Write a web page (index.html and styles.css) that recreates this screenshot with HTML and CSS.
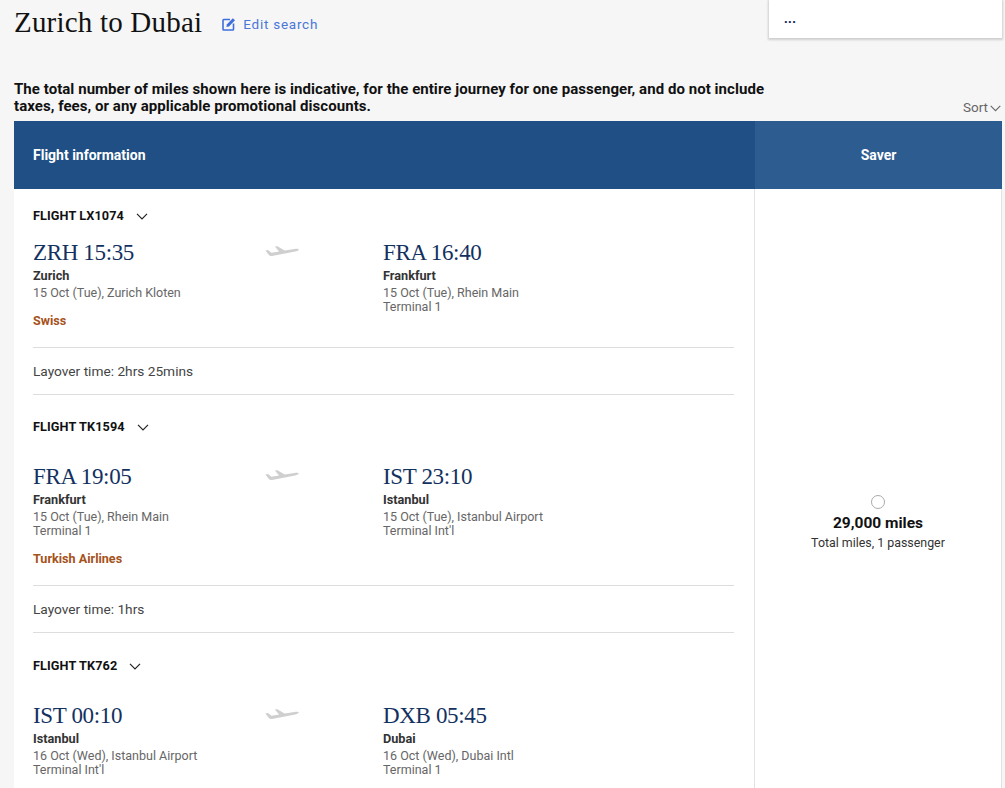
FILE: index.html
```html
<!DOCTYPE html>
<html lang="en">
<head>
<meta charset="utf-8">
<title>Zurich to Dubai</title>
<link rel="stylesheet" href="styles.css">
</head>
<body>
<div class="page">
  <div class="popup"><span class="dots">...</span></div>
  <div class="title-row">
    <h1 class="title">Zurich to Dubai</h1>
    <a class="edit">
      <svg class="edit-icon" viewBox="0 0 14 14" width="14" height="14"><path d="M8 2.500H1.700a.7.7 0 0 0-.7.7v9.100c0 .4.3.7.7.7h9.100c.4 0 .7-.3.7-.7V6.500" fill="none" stroke="#3f6fdc" stroke-width="1.6"/><path d="M5 7.300 10.800 1.200 13 3.300 7 9.400l-2.600.5z" fill="#3f6fdc"/></svg>
      Edit search
    </a>
  </div>
  <div class="notice-row">
    <p class="notice">The total number of miles shown here is indicative, for the entire journey for one passenger, and do not include taxes, fees, or any applicable promotional discounts.</p>
    <div class="sort">Sort<svg class="sort-chev" viewBox="0 0 11 7" width="11" height="7"><path d="M.7.8 5.500 5.600 10.300.8" fill="none" stroke="#666" stroke-width="1.1"/></svg></div>
  </div>
  <div class="table">
    <div class="head">
      <div class="head-info">Flight information</div>
      <div class="head-fare">Saver</div>
    </div>
    <div class="body">
      <div class="legs">
        <section class="leg leg-first">
          <div class="flight">FLIGHT LX1074<svg class="chev" viewBox="0 0 12 7" width="12" height="7"><path d="M1 .8 6 5.800 11 .8" fill="none" stroke="#222" stroke-width="1.2"/></svg></div>
          <div class="route route-first">
            <div class="stop">
              <div class="time">ZRH 15:35</div>
              <div class="city">Zurich</div>
              <div class="info">15 Oct (Tue), Zurich Kloten</div>
            </div>
            <svg class="plane" viewBox="0 0 34 14" width="34" height="14"><path d="M.5 5.500 3 5l3.500 2.700 7.600-1.200L9.800 1.600l2.600-.4 7.200 4.400 10-1.600c2-.3 4-.2 4.200.6.100.8-1.600 1.400-3.600 1.800L7 11C5.600 11.200 4.600 10.800 3.800 10z" fill="#cfcfcf"/></svg>
            <div class="stop">
              <div class="time">FRA 16:40</div>
              <div class="city">Frankfurt</div>
              <div class="info">15 Oct (Tue), Rhein Main<br>Terminal 1</div>
            </div>
          </div>
          <div class="airline airline-swiss">Swiss</div>
        </section>
        <div class="layover">Layover time: 2hrs 25mins</div>
        <section class="leg">
          <div class="flight">FLIGHT TK1594<svg class="chev" viewBox="0 0 12 7" width="12" height="7"><path d="M1 .8 6 5.800 11 .8" fill="none" stroke="#222" stroke-width="1.2"/></svg></div>
          <div class="route">
            <div class="stop">
              <div class="time">FRA 19:05</div>
              <div class="city">Frankfurt</div>
              <div class="info">15 Oct (Tue), Rhein Main<br>Terminal 1</div>
            </div>
            <svg class="plane" viewBox="0 0 34 14" width="34" height="14"><path d="M.5 5.500 3 5l3.500 2.700 7.600-1.200L9.800 1.600l2.600-.4 7.200 4.400 10-1.600c2-.3 4-.2 4.200.6.100.8-1.600 1.400-3.600 1.800L7 11C5.600 11.200 4.600 10.800 3.800 10z" fill="#cfcfcf"/></svg>
            <div class="stop">
              <div class="time">IST 23:10</div>
              <div class="city">Istanbul</div>
              <div class="info">15 Oct (Tue), Istanbul Airport<br>Terminal Int'l</div>
            </div>
          </div>
          <div class="airline">Turkish Airlines</div>
        </section>
        <div class="layover">Layover time: 1hrs</div>
        <section class="leg leg-last">
          <div class="flight">FLIGHT TK762<svg class="chev" viewBox="0 0 12 7" width="12" height="7"><path d="M1 .8 6 5.800 11 .8" fill="none" stroke="#222" stroke-width="1.2"/></svg></div>
          <div class="route">
            <div class="stop">
              <div class="time">IST 00:10</div>
              <div class="city">Istanbul</div>
              <div class="info">16 Oct (Wed), Istanbul Airport<br>Terminal Int'l</div>
            </div>
            <svg class="plane" viewBox="0 0 34 14" width="34" height="14"><path d="M.5 5.500 3 5l3.500 2.700 7.600-1.200L9.800 1.600l2.600-.4 7.200 4.400 10-1.600c2-.3 4-.2 4.200.6.100.8-1.600 1.400-3.600 1.800L7 11C5.600 11.200 4.600 10.800 3.800 10z" fill="#cfcfcf"/></svg>
            <div class="stop">
              <div class="time">DXB 05:45</div>
              <div class="city">Dubai</div>
              <div class="info">16 Oct (Wed), Dubai Intl<br>Terminal 1</div>
            </div>
          </div>
        </section>
      </div>
      <div class="fare">
        <span class="radio"></span>
        <div class="miles">29,000 miles</div>
        <div class="miles-note">Total miles, 1 passenger</div>
      </div>
    </div>
  </div>
</div>
</body>
</html>
```
FILE: styles.css
```css
* { box-sizing: border-box; }
html, body { margin: 0; height: 788px; overflow: hidden; }
body { background: #f6f6f6; font-family: "Roboto", "Liberation Sans", sans-serif; color: #222; }
.page { position: relative; padding: 0 3px 0 14px; }
.popup { position: absolute; top: 0; left: 769px; width: 233px; height: 38px; background: #fff; box-shadow: 0 1px 2px 1px rgba(0,0,0,.16); padding: 12px 15px; }
.dots { font: bold 13px/14px "Liberation Sans", sans-serif; color: #12295c; display: block; letter-spacing: .5px; }
.title-row { display: flex; align-items: center; height: 44px; }
.title { margin: 0; font: 400 29px/44px "Liberation Serif", serif; color: #111; letter-spacing: .2px; }
.edit { display: flex; align-items: center; margin-left: 20px; color: #4a76d8; font-size: 13.5px; letter-spacing: .75px; margin-top: 4px; }
.edit-icon { margin-right: 7px; }
.notice-row { position: relative; padding-top: 37px; height: 77px; }
.notice { margin: 0; width: 760px; font-size: 15px; line-height: 17px; font-weight: 700; color: #111; letter-spacing: .05px; }
.sort { position: absolute; right: 1px; top: 54px; display: flex; align-items: center; gap: 2px; font-size: 13.5px; line-height: 18px; color: #666; }
.sort-chev { margin-top: 2px; }
.table { width: 988px; }
.head { display: flex; height: 68px; color: #fff; font-size: 14px; font-weight: 700; }
.head-info { width: 741px; background: #1f4f85; display: flex; align-items: center; padding-left: 19px; }
.head-fare { flex: 1; background: #2d5c91; display: flex; align-items: center; justify-content: center; }
.body { display: flex; background: #fff; min-height: 668px; }
.legs { width: 740px; padding: 0 20px 0 19px; }
.leg { padding-top: 26px; }
.leg-first { padding-top: 21px; }
.leg-last { padding-top: 27px; }
.flight { display: flex; align-items: center; font-size: 12.7px; line-height: 12px; font-weight: 700; color: #111; letter-spacing: .1px; }
.chev { margin-left: 12px; }
.route { display: flex; margin-top: 31px; }
.route-first { margin-top: 18px; }
.stop { width: 232px; }
.stop + .plane + .stop { width: auto; margin-left: 84px; }
.plane { margin-top: 5px; flex: none; }
.time { font: 400 23px/26px "Liberation Serif", serif; color: #13315f; letter-spacing: -.35px; }
.city { margin-top: 3px; font-size: 12.7px; line-height: 14px; font-weight: 700; color: #333; }
.info { margin-top: 3px; font-size: 12.5px; line-height: 14px; color: #666; }
.airline { margin-top: 14px; padding-bottom: 19px; font-size: 12.6px; line-height: 14px; font-weight: 700; color: #a5521b; }
.airline-swiss { margin-top: 0; }
.layover { border-top: 1px solid #ddd; border-bottom: 1px solid #ddd; height: 48px; display: flex; align-items: center; font-size: 13.7px; color: #444; }
.fare { flex: 1; border-left: 1px solid #e2e2e2; border-right: 1px solid #e2e2e2; display: flex; flex-direction: column; align-items: center; justify-content: center; }
.radio { width: 14px; height: 14px; border: 1px solid #aaa; border-radius: 50%; background: #fff; }
.miles { margin-top: 6px; font-size: 15.5px; line-height: 17px; font-weight: 700; color: #111; }
.miles-note { margin-top: 3px; font-size: 12.4px; line-height: 16px; color: #333; }
```
